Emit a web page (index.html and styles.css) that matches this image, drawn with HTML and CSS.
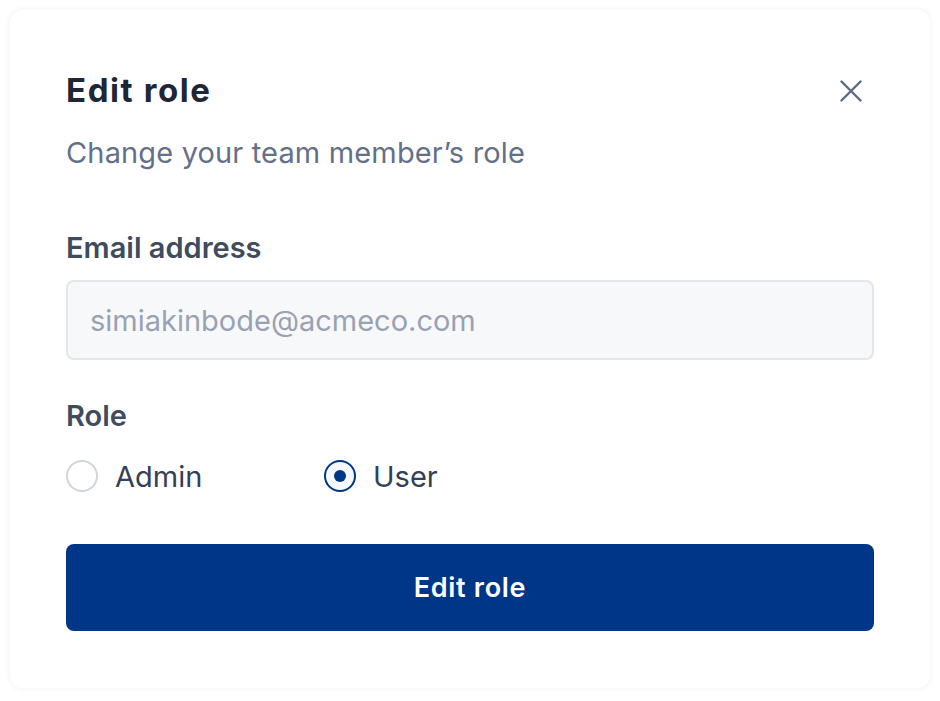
FILE: index.html
```html
<!DOCTYPE html>
<html>
<head>
<meta charset="utf-8">
<link rel="stylesheet" href="styles.css">
</head>
<body>
<div class="card">
  <div class="header">
    <h1 class="title">Edit role</h1>
    <button class="close" aria-label="Close">
      <svg width="22" height="22" viewBox="0 0 22 22" fill="none" stroke="#5b6b84" stroke-width="2.4" stroke-linecap="round"><path d="M1.5 1.5L20.5 20.5M20.5 1.5L1.5 20.5"/></svg>
    </button>
  </div>
  <p class="subtitle">Change your team member’s role</p>
  <label class="label">Email address</label>
  <div class="input">simiakinbode@acmeco.com</div>
  <div class="label role-label">Role</div>
  <div class="radios">
    <div class="radio"><span class="dot"></span><span>Admin</span></div>
    <div class="radio checked"><span class="dot"></span><span>User</span></div>
  </div>
  <button class="submit">Edit role</button>
</div>
</body>
</html>
```
FILE: styles.css
```css
* { box-sizing: border-box; }
html, body { margin: 0; background: #fff; }
body { padding: 10px; font-family: "Inter", "Lato", sans-serif; width: 940px; }
.card {
  width: 920px;
  height: 678px;
  border-radius: 12px;
  background: #fff;
  box-shadow: 0 0 6px rgba(16, 24, 40, 0.07);
  padding: 62px 56px 57px;
}
.header { display: flex; justify-content: space-between; align-items: center; height: 36px; }
.title { margin: 0; font-size: 33px; line-height: 36px; font-weight: 700; color: #1d2738; letter-spacing: 1.6px; }
.close { border: 0; background: none; padding: 0; width: 22px; height: 22px; margin-right: 12px; margin-top: 2px; display: flex; }
.subtitle { margin: 29px 0 0; font-size: 29px; line-height: 32px; color: #647089; letter-spacing: 0.15px; }
.label { display: block; margin-top: 63px; font-size: 29px; line-height: 32px; font-weight: 600; color: #404b5e; }
.input {
  margin-top: 16px; height: 80px; border: 2px solid #e3e6eb; border-radius: 8px;
  background: #f7f8fa; color: #98a2b3; font-size: 29px; padding: 0 22px;
  display: flex; align-items: center;
}
.role-label { margin-top: 40px; }
.radios { display: flex; margin-top: 24px; height: 40px; align-items: center; }
.radio { display: flex; align-items: center; gap: 17px; font-size: 29px; color: #344054; width: 258px; }
.dot { width: 32px; height: 32px; border-radius: 50%; border: 2px solid #d0d5dd; background: #fff; position: relative; flex: none; }
.checked .dot { border-color: #003687; background: #f5f8ff; }
.checked .dot::after { content: ""; position: absolute; left: 50%; top: 50%; width: 12px; height: 12px; margin: -6px 0 0 -6px; border-radius: 50%; background: #003687; }
.submit {
  margin-top: 48px; width: 100%; height: 87px; border: 0; border-radius: 8px;
  background: #003687; color: #fff; font-family: inherit; font-size: 27px; font-weight: 600; letter-spacing: 0.7px;
}
```
